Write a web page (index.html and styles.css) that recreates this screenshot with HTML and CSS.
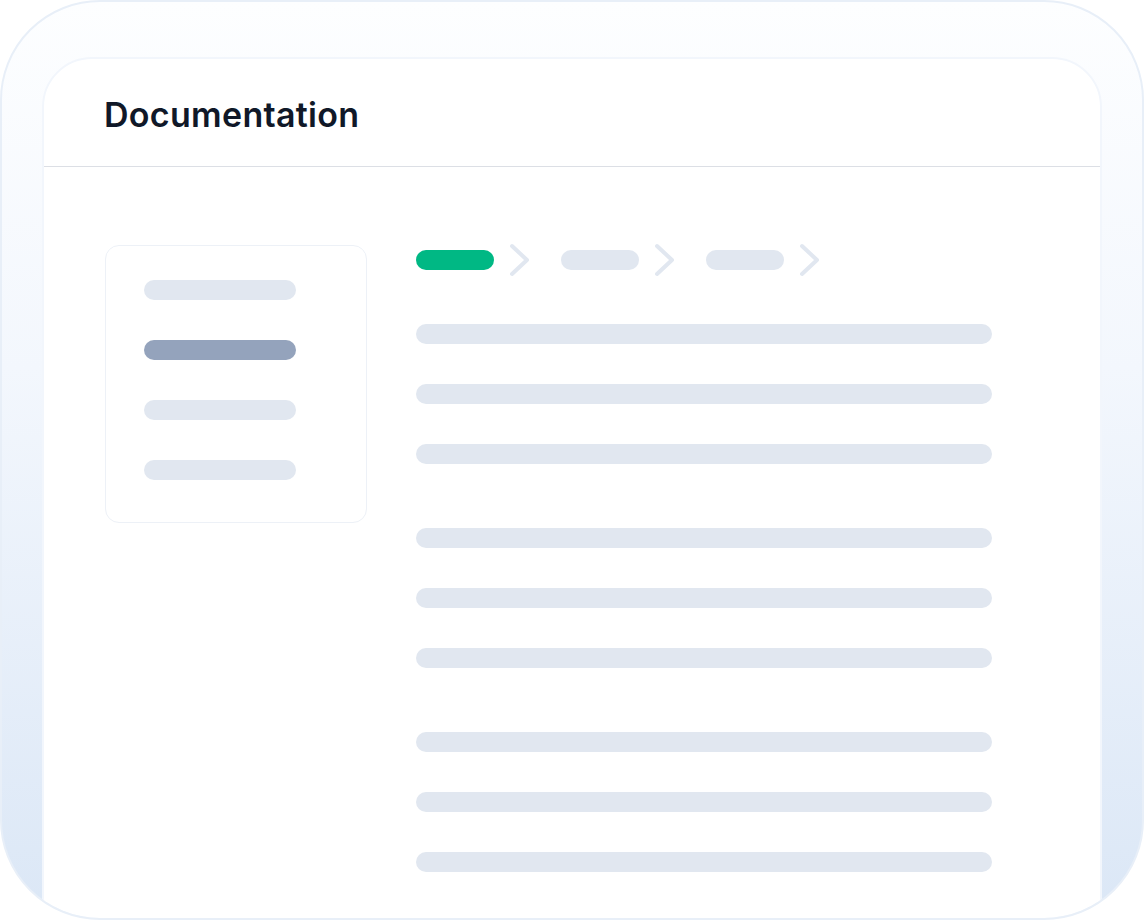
FILE: index.html
```html
<!DOCTYPE html>
<html lang="en">
<head>
<meta charset="utf-8">
<title>Documentation</title>
<link rel="stylesheet" href="styles.css">
</head>
<body>
<div class="frame">
  <div class="card">
    <header class="card-header">
      <h1 class="title">Documentation</h1>
    </header>
    <div class="card-body">
      <aside class="sidebar">
        <div class="side-bar"></div>
        <div class="side-bar active"></div>
        <div class="side-bar"></div>
        <div class="side-bar"></div>
      </aside>
      <main class="content">
        <nav class="crumbs">
          <span class="pill green"></span>
          <svg class="chev" width="20" height="34" viewBox="0 0 20 34"><path d="M2 3 L17 17 L2 31" fill="none" stroke="#e1e7f0" stroke-width="4" stroke-linecap="round" stroke-linejoin="round"/></svg>
          <span class="pill"></span>
          <svg class="chev" width="20" height="34" viewBox="0 0 20 34"><path d="M2 3 L17 17 L2 31" fill="none" stroke="#e1e7f0" stroke-width="4" stroke-linecap="round" stroke-linejoin="round"/></svg>
          <span class="pill"></span>
          <svg class="chev" width="20" height="34" viewBox="0 0 20 34"><path d="M2 3 L17 17 L2 31" fill="none" stroke="#e1e7f0" stroke-width="4" stroke-linecap="round" stroke-linejoin="round"/></svg>
        </nav>
        <div class="group">
          <div class="line"></div>
          <div class="line"></div>
          <div class="line"></div>
        </div>
        <div class="group">
          <div class="line"></div>
          <div class="line"></div>
          <div class="line"></div>
        </div>
        <div class="group">
          <div class="line"></div>
          <div class="line"></div>
          <div class="line"></div>
        </div>
      </main>
    </div>
  </div>
</div>
</body>
</html>
```

FILE: styles.css
```css
* { box-sizing: border-box; }
html, body { margin: 0; padding: 0; background: #ffffff; }
body { font-family: Inter, "Noto Sans", sans-serif; }

.frame {
  width: 1144px;
  height: 920px;
  border: 2px solid #e8eff8;
  border-radius: 100px;
  overflow: hidden;
  background: linear-gradient(180deg, #fdfeff 0%, #f3f7fd 40%, #dbe7f6 100%);
  padding: 55px 40px 0 40px;
}

.card {
  width: 1060px;
  min-height: 940px;
  background: #ffffff;
  border: 2px solid #f2f6fc;
  border-radius: 50px;
}

.card-header {
  height: 108px;
  border-bottom: 1px solid #dcdfe5;
  padding: 0 0 0 60px;
  display: flex;
  align-items: center;
}

.title {
  margin: 0;
  font-size: 34px;
  font-weight: 600;
  color: #101828;
  letter-spacing: 0.3px;
  padding-top: 4px;
}

.card-body {
  display: flex;
  align-items: flex-start;
  padding: 76px 0 0 61px;
}

.sidebar {
  width: 262px;
  height: 278px;
  margin-top: 2px;
  border: 1px solid #edf1f7;
  border-radius: 14px;
  padding: 34px 0 0 38px;
  display: flex;
  flex-direction: column;
  gap: 40px;
}

.side-bar {
  width: 152px;
  height: 20px;
  border-radius: 10px;
  background: #e1e7f0;
}
.side-bar.active { background: #94a3bc; }

.content {
  margin-left: 49px;
  display: flex;
  flex-direction: column;
}

.crumbs {
  display: flex;
  align-items: center;
  height: 34px;
}
.pill {
  width: 78px;
  height: 20px;
  border-radius: 10px;
  background: #e1e7f0;
}
.pill.green { background: #00b884; }
.chev { display: block; margin: 0 31px 0 16px; }

.group {
  display: flex;
  flex-direction: column;
  gap: 40px;
  margin-top: 64px;
}
.crumbs + .group { margin-top: 47px; }

.line {
  width: 576px;
  height: 20px;
  border-radius: 10px;
  background: #e1e7f0;
}
```
